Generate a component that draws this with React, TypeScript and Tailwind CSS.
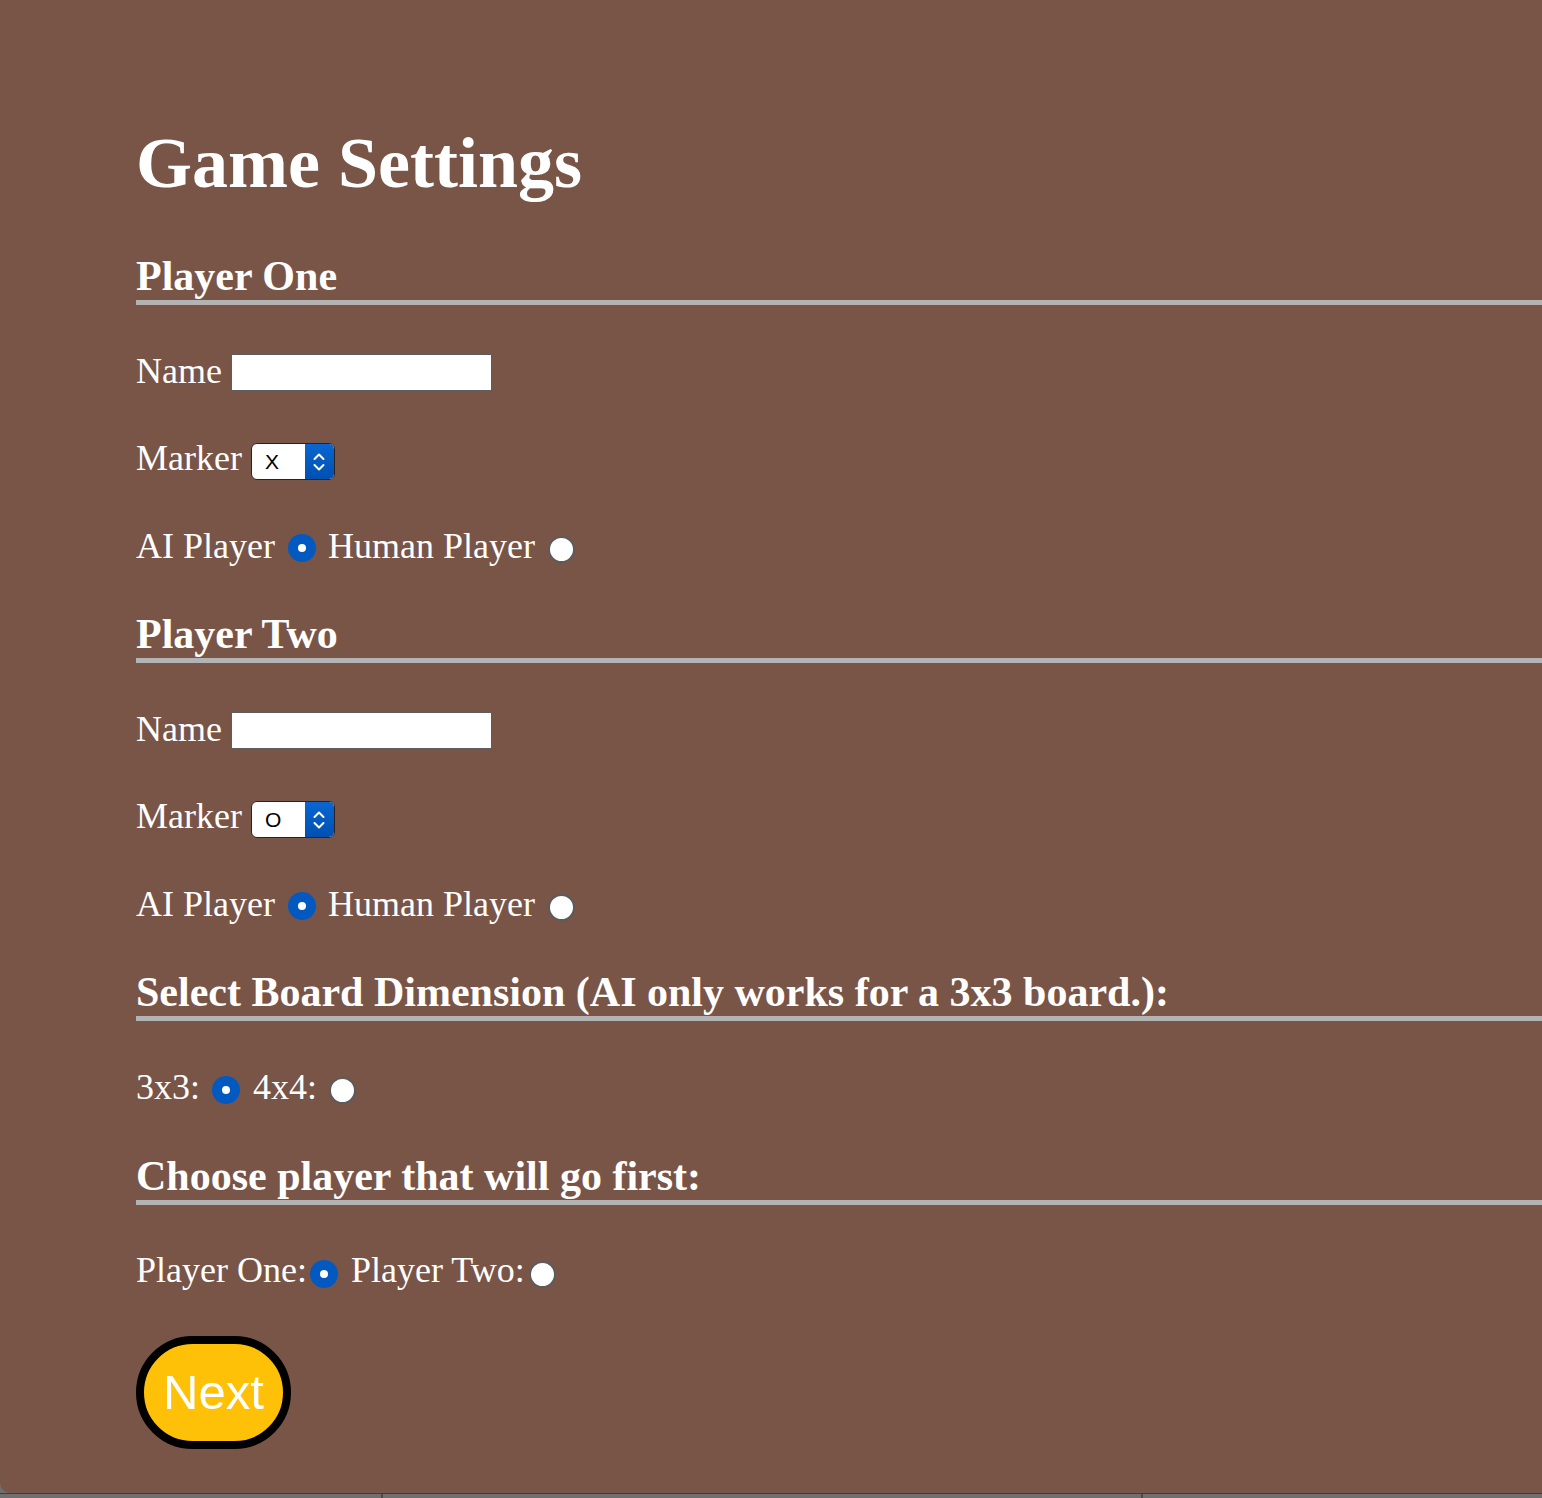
import React from "react";

function Radio({ checked, className }: { checked: boolean; className: string }) {
  if (checked) {
    return (
      <span className={"flex h-[28px] w-[28px] shrink-0 items-center justify-center rounded-full bg-[#0459c0] " + className}>
        <span className="h-[8px] w-[8px] rounded-full bg-white" />
      </span>
    );
  }
  return <span className={"block h-[27px] w-[27px] shrink-0 rounded-full border-2 border-[#5b5b5b] bg-white " + className} />;
}

function Heading({ children, className }: { children: React.ReactNode; className: string }) {
  return (
    <h2 className={"border-b-[5px] border-[#b3b3b3] pt-[3px] text-[42px] font-bold leading-[48px] text-white " + className}>
      {children}
    </h2>
  );
}

function Select({ value }: { value: string }) {
  return (
    <div className="ml-[9px] mt-[7px] flex h-[37px] w-[84px] overflow-hidden rounded-[6px] border-[1.5px] border-[#2b2220] bg-white">
      <div className="flex flex-1 items-center pl-[13px] font-['Liberation_Sans',Arial,sans-serif] text-[21px] leading-none text-black">
        {value}
      </div>
      <div className="flex w-[29px] items-center justify-center bg-gradient-to-b from-[#0a66d2] to-[#0050b0]">
        <svg width="14" height="26" viewBox="0 0 14 26" fill="none" stroke="white" strokeWidth="2" strokeLinecap="round" strokeLinejoin="round">
          <path d="M2.5 10 L7 5.5 L11.5 10" />
          <path d="M2.5 16 L7 20.5 L11.5 16" />
        </svg>
      </div>
    </div>
  );
}

function PlayerSection({ title, marker, headingClass }: { title: string; marker: string; headingClass: string }) {
  return (
    <>
      <Heading className={headingClass}>{title}</Heading>
      <div className="mt-[44px] flex h-[41px] items-start">
        <span>Name</span>
        <div className="ml-[9px] mt-[5px] h-[37px] w-[261px] border-[1.5px] border-[#5d5d5d] bg-white" />
      </div>
      <div className="mt-[46px] flex h-[41px] items-start">
        <span>Marker</span>
        <Select value={marker} />
      </div>
      <div className="mt-[47px] flex h-[41px] items-start">
        <span>AI Player</span>
        <Radio checked className="ml-[13px] mr-[12px] mt-[10px]" />
        <span>Human Player</span>
        <Radio checked={false} className="ml-[13px] mt-[12px]" />
      </div>
    </>
  );
}

export default function App() {
  return (
    <div className="flex h-[1498px] w-full flex-col bg-[#6f6f6f]">
      <div className="h-[1493px] w-full rounded-bl-[10px] bg-[#795548] pl-[136px] font-['Liberation_Serif','Times_New_Roman',serif] text-[36px] leading-[45px] text-white">
        <h1 className="pt-[122px] text-[72px] font-bold leading-[83px]">Game Settings</h1>
        <PlayerSection title="Player One" marker="X" headingClass="mt-[44px]" />
        <PlayerSection title="Player Two" marker="O" headingClass="mt-[42px]" />
        <Heading className="mt-[42px]">Select Board Dimension (AI only works for a 3x3 board.):</Heading>
        <div className="mt-[44px] flex h-[41px] items-start">
          <span>3x3:</span>
          <Radio checked className="ml-[12px] mr-[13px] mt-[11px]" />
          <span>4x4:</span>
          <Radio checked={false} className="ml-[12px] mt-[12px]" />
        </div>
        <Heading className="mt-[43px]">Choose player that will go first:</Heading>
        <div className="mt-[43px] flex h-[41px] items-start">
          <span>Player One:</span>
          <Radio checked className="ml-[3px] mr-[13px] mt-[12px]" />
          <span>Player Two:</span>
          <Radio checked={false} className="ml-[4px] mt-[13px]" />
        </div>
        <button className="mt-[47px] flex h-[113px] w-[155px] items-center justify-center rounded-full border-[8px] border-black bg-[#ffc107] font-['Liberation_Sans',Arial,sans-serif] text-[49px] leading-none text-white">
          Next
        </button>
      </div>
      <div className="flex h-[5px] w-full border-t border-[#3d3d3d]">
        <div className="w-[383px] border-r-2 border-[#4a4a4a]" />
        <div className="w-[760px] border-r-2 border-[#4a4a4a]" />
      </div>
    </div>
  );
}
